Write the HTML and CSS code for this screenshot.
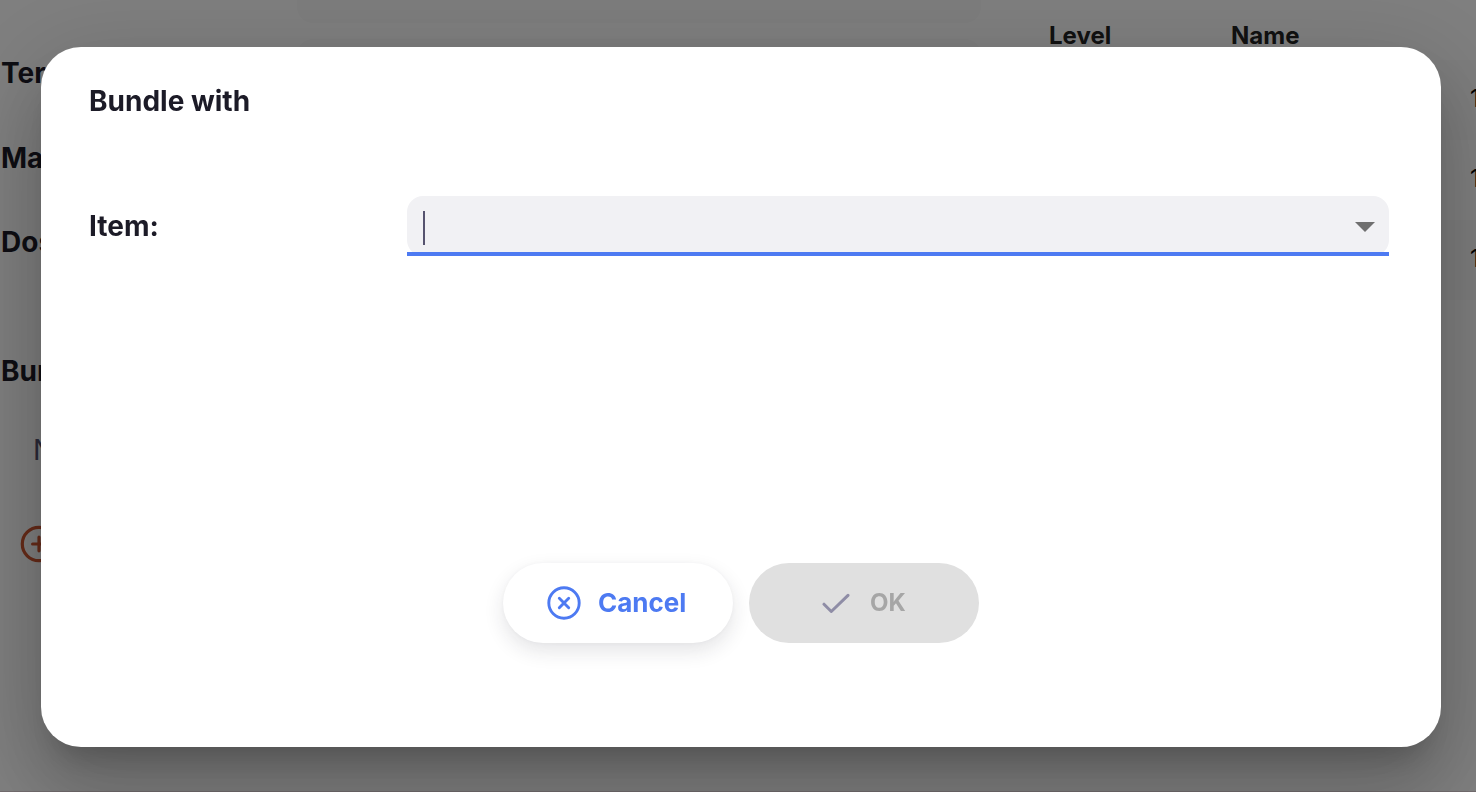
FILE: index.html
```html
<!DOCTYPE html>
<html lang="en">
<head>
<meta charset="utf-8">
<title>Bundle with</title>
<link rel="stylesheet" href="styles.css">
</head>
<body>
<main class="page">
  <section class="details">
    <div class="labels">
      <div class="label">Ter</div>
      <div class="label">Ma</div>
      <div class="label">Dos</div>
      <div class="label section-label">Bun</div>
      <div class="empty">N</div>
      <svg class="add" viewBox="0 0 38 38" fill="none" stroke="#cf5630" stroke-width="3.2" stroke-linecap="round"><circle cx="19" cy="19" r="16.7"/><path d="M12.6 19h12.8M19 12.2v13.6"/></svg>
    </div>
    <div class="fields"><div class="field field-top"></div><div class="field"></div></div>
  </section>
  <section class="table">
    <div class="row head"><span>Level</span><span>Name</span></div>
    <div class="row odd"><span class="num">1</span></div>
    <div class="row"><span class="num">1</span></div>
    <div class="row odd"><span class="num">1</span></div>
  </section>
</main>
<div class="backdrop">
  <div class="dialog" role="dialog" aria-label="Bundle with">
    <h2 class="title">Bundle with</h2>
    <div class="form-row">
      <div class="form-label">Item:</div>
      <div class="select"><span class="caret"></span><span class="arrow"></span></div>
    </div>
    <div class="actions">
      <button class="btn cancel">
        <svg width="34" height="34" viewBox="0 0 34 34" fill="none" stroke="currentColor" stroke-width="2.9" stroke-linecap="round"><circle cx="17" cy="17" r="15.2"/><path d="M12.3 12.3l9.4 9.4M21.7 12.3l-9.4 9.4"/></svg>
        <span>Cancel</span>
      </button>
      <button class="btn ok" disabled>
        <svg width="28" height="20" viewBox="0 0 28 20" fill="none" stroke="#8f8da6" stroke-width="3" stroke-linecap="round" stroke-linejoin="round"><path d="M2 11.2L9.3 18.5L26 2.3"/></svg>
        <span>OK</span>
      </button>
    </div>
  </div>
</div>
</body>
</html>
```
FILE: styles.css
```css
* { box-sizing: border-box; }
body {
  margin: 0;
  height: 792px;
  overflow: hidden;
  font-family: Inter, "Liberation Sans", sans-serif;
  color: #1c1b27;
  background: #fff;
}
.page {
  display: flex;
  height: 792px;
  overflow: hidden;
  border-bottom: 1px solid #e4d8dc;
}
.details { display: flex; flex: 0 0 981px; }
.labels {
  flex: 0 0 297px;
  padding: 56px 0 0 1px;
}
.label {
  height: 34px;
  margin-bottom: 50.5px;
  font-size: 28px;
  line-height: 34px;
  font-weight: 700;
}
.section-label { margin: 95px 0 45px; }
.empty {
  padding-left: 32px;
  font-size: 28px;
  line-height: 34px;
  color: #56536f;
}
.add {
  display: block;
  width: 38px;
  height: 38px;
  margin: 58px 0 0 19px;
}
.fields { flex: 1; }
.field { height: 60px; margin-top: 16px; border-radius: 16px; background: #fafafa; }
.field-top { height: 23px; margin: 0; border-radius: 0 0 16px 16px; }
.table { flex: 0 0 560px; color: #222; font-size: 24px; }
.row { display: flex; align-items: center; height: 80px; }
.head {
  height: 60px;
  padding: 12px 0 0 66px;
  align-items: flex-start;
  line-height: 48px;
  font-weight: 700;
}
.head span { width: 182px; padding-left: 2px; }
.odd { background: #fafafa; }
.num { padding: 0 0 4px 489px; color: #000; }
.backdrop {
  position: fixed;
  inset: 0;
  padding: 47px 35px 45px 41px;
  background: rgba(0, 0, 0, .5);
}
.dialog {
  width: 1400px;
  height: 700px;
  padding: 36px 52px 0 48px;
  border-radius: 40px;
  background: #fff;
  box-shadow: 0 22px 30px -14px rgba(0,0,0,.2), 0 48px 76px 6px rgba(0,0,0,.14), 0 18px 92px 16px rgba(0,0,0,.12);
}
.title {
  margin: 0;
  height: 113px;
  font-size: 28px;
  line-height: 36px;
  font-weight: 700;
}
.form-row { display: flex; height: 60px; align-items: center; }
.form-label { width: 318px; font-size: 28px; font-weight: 700; }
.select {
  display: flex;
  align-items: center;
  justify-content: space-between;
  flex: 1;
  height: 60px;
  padding: 0 14px 0 16px;
  position: relative;
  border-radius: 16px;
  background: #f1f1f4;
}
.select::after {
  content: "";
  position: absolute;
  inset: auto 0 0;
  height: 4px;
  background: #4d7af2;
}
.caret { width: 2px; height: 34px; margin-top: 4px; background: #56536f; }
.arrow {
  margin-top: 2px;
  border: 10px solid transparent;
  border-top-color: #6f6f6f;
  border-bottom: 0;
}
.actions { display: flex; justify-content: center; gap: 16px; margin: 307px -4px 0 0; }
.btn {
  display: flex;
  align-items: center;
  width: 230px;
  height: 80px;
  padding: 0 0 0 44px;
  border: 0;
  border-radius: 40px;
  font: 700 26px Inter, "Liberation Sans", sans-serif;
}
.btn span { padding-bottom: 2px; }
.cancel {
  gap: 17px;
  color: #4d7af2;
  background: #fff;
  box-shadow: 0 8px 20px rgba(30, 35, 50, .12), 0 0 4px rgba(30, 35, 50, .03);
}
.ok { gap: 20px; padding-left: 73px; font-size: 24px; color: #a6a6a6; background: #e0e0e0; }
```
